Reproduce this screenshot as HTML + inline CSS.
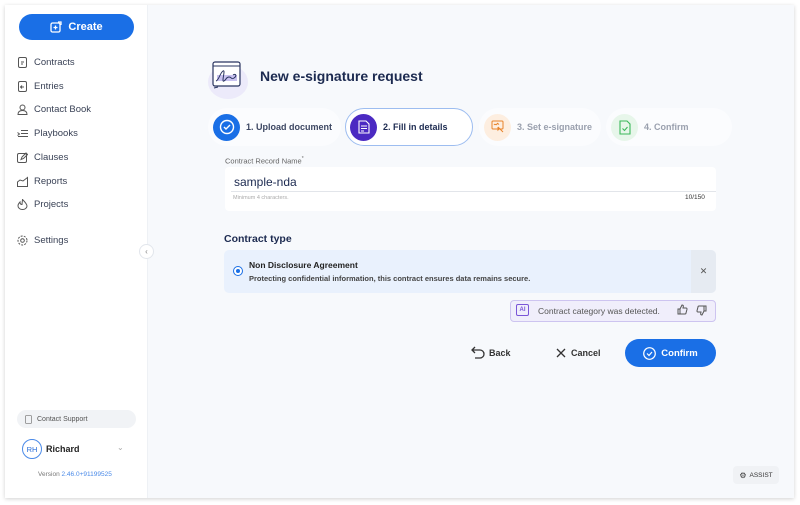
<!DOCTYPE html>
<html><head><meta charset="utf-8"><style>
*{box-sizing:border-box;margin:0;padding:0}
body{width:800px;height:505px;background:#fff;font-family:"Liberation Sans",sans-serif;position:relative;overflow:hidden;color:#1e2a4a}
.frame{position:absolute;left:5px;top:5px;width:789px;height:493px;background:#f7f9fc;box-shadow:0 1px 4px rgba(0,0,0,.18);overflow:hidden}
.side{position:absolute;left:0;top:0;width:143px;height:493px;background:#fff;border-right:1px solid #eef1f5}
.create{position:absolute;left:14px;top:9px;width:115px;height:26px;border-radius:13px;background:#1a6fe6;color:#fff;font-weight:bold;font-size:11px;display:flex;align-items:center;justify-content:center;gap:6px}
.nav{position:absolute;left:12px;font-size:9.5px;color:#3a4256;display:flex;align-items:center;gap:6px}
.nav svg{width:11px;height:11px}
.abs{position:absolute}
.pill{position:absolute;top:103px;height:38px;border-radius:19px;background:#fbfcfe;display:flex;align-items:center;font-size:9px;font-weight:bold}
.circ{width:27px;height:27px;border-radius:50%;margin-left:5px;margin-right:6px;display:flex;align-items:center;justify-content:center}
</style></head><body>
<div class="frame">
<div class="side">
  <div class="create"><svg width="12" height="12" viewBox="0 0 12 12" fill="none" stroke="#fff" stroke-width="1.3"><rect x="1" y="2" width="9" height="9" rx="1.5"/><path d="M5.5 4.5v4M3.5 6.5h4M8 1h3v3"/></svg>Create</div>
  <div class="nav" style="top:52px"><svg viewBox="0 0 11 11" fill="none" stroke="#555" stroke-width="1"><rect x="1.5" y="0.5" width="8" height="10" rx="1.5"/><path d="M4 5h3M4 7h2"/></svg>Contracts</div>
  <div class="nav" style="top:76px"><svg viewBox="0 0 11 11" fill="none" stroke="#555" stroke-width="1"><rect x="1.5" y="0.5" width="8" height="10" rx="1.5"/><path d="M7 6H3.5M5 4.5L3.5 6 5 7.5"/></svg>Entries</div>
  <div class="nav" style="top:99px"><svg viewBox="0 0 11 11" fill="none" stroke="#555" stroke-width="1"><circle cx="5.5" cy="3.5" r="2.5"/><path d="M1 10.5c0-3 2-4 4.5-4s4.5 1 4.5 4z"/></svg>Contact Book</div>
  <div class="nav" style="top:123px"><svg viewBox="0 0 11 11" fill="none" stroke="#555" stroke-width="1"><path d="M4 2.5h7M4 5.5h7M1 8.5h10M0.5 4.5l2 1.5-2 1.5"/></svg>Playbooks</div>
  <div class="nav" style="top:147px"><svg viewBox="0 0 11 11" fill="none" stroke="#555" stroke-width="1"><rect x="0.5" y="1.5" width="9" height="9" rx="1.5"/><path d="M4 7.5l1-2.5 4-4 1.5 1.5-4 4z"/></svg>Clauses</div>
  <div class="nav" style="top:171px"><svg viewBox="0 0 11 11" fill="none" stroke="#555" stroke-width="1"><path d="M0.5 10.5h10V1.5L6 5 3 4 0.5 6z"/></svg>Reports</div>
  <div class="nav" style="top:194px"><svg viewBox="0 0 11 11" fill="none" stroke="#555" stroke-width="1"><path d="M5.5 0.5C9 4 10 6 10 7a4.5 3.5 0 01-9 0c0-2 1-3 2-4 0 2 1 2.5 2 2.5z"/></svg>Projects</div>
  <div class="nav" style="top:230px"><svg viewBox="0 0 11 11" fill="none" stroke="#555" stroke-width="1"><circle cx="5.5" cy="5.5" r="1.8"/><circle cx="5.5" cy="5.5" r="4.5" stroke-dasharray="2 1.2"/></svg>Settings</div>
  <div class="abs" style="left:12px;top:405px;width:119px;height:18px;border-radius:9px;background:#f1f3f6;font-size:7px;color:#555;display:flex;align-items:center;padding-left:8px;gap:5px"><svg width="7" height="9" viewBox="0 0 7 9" fill="none" stroke="#888" stroke-width=".8"><rect x=".5" y=".5" width="6" height="8" rx="1"/></svg>Contact Support</div>
  <div class="abs" style="left:17px;top:434px;width:20px;height:20px;border-radius:50%;border:1.3px solid #4a8ae8;color:#2a6fd8;font-size:7.5px;display:flex;align-items:center;justify-content:center">RH</div>
  <div class="abs" style="left:41px;top:439px;font-size:9px;font-weight:bold;color:#222">Richard</div>
  <div class="abs" style="left:112px;top:438px;font-size:8px;color:#aaa">&#8964;</div>
  <div class="abs" style="left:33px;top:466px;font-size:6.5px;color:#777">Version <span style="color:#4a8ae8">2.46.0+91199525</span></div>
</div>
<div class="abs" style="left:134px;top:239px;width:15px;height:15px;border-radius:50%;background:#fff;border:1px solid #e2e6ec;font-size:8px;color:#888;text-align:center;line-height:13px">&#8249;</div>

<svg class="abs" style="left:201px;top:50px" width="48" height="45" viewBox="0 0 48 45"><ellipse cx="22" cy="27" rx="20" ry="17" fill="#eceafa"/><rect x="7" y="7" width="27" height="24" rx="2" fill="#fff" stroke="#2a3560" stroke-width="1.2"/><path d="M7 11h27" stroke="#2a3560"/><rect x="11" y="20" width="20" height="6" fill="#c9c2f0"/><path d="M10 26c3-1 4-8 7-10s-2 12 1 10 2-4 5-4 2 3 5 1 2-5-1-3" fill="none" stroke="#2a3560" stroke-width="1"/><path d="M8 33l4-1" stroke="#2a3560"/></svg>
<div class="abs" style="left:255px;top:63px;font-size:14px;font-weight:bold;color:#1c2a50">New e-signature request</div>

<div class="pill" style="left:203px;width:133px"><div class="circ" style="background:#1a6fe6"><svg width="16" height="16" viewBox="0 0 16 16" fill="none" stroke="#fff" stroke-width="1.4"><circle cx="8" cy="8" r="6.5"/><path d="M5 8l2 2 4-4"/></svg></div><span style="color:#3c4662">1. Upload document</span></div>
<div class="pill" style="left:340px;width:128px;border:1.5px solid #9dbdf0;background:#fff"><div class="circ" style="background:#4b2ac2;margin-left:4px"><svg width="12" height="14" viewBox="0 0 12 14" fill="none" stroke="#fff" stroke-width="1.1"><path d="M1 1h7l3 3v9H1z"/><path d="M3 6h6M3 8.5h6M3 11h3"/></svg></div><span style="color:#1c2a50">2. Fill in details</span></div>
<div class="pill" style="left:474px;width:122px"><div class="circ" style="background:#fdeee0"><svg width="14" height="14" viewBox="0 0 14 14" fill="none" stroke="#e8832a" stroke-width="1"><rect x="1" y="1" width="11" height="8" rx="1"/><path d="M3 5c1-2 2 1 3-1s1 1 2 0M7 7l5 5M7 7v3l1-1"/></svg></div><span style="color:#9aa0ae">3. Set e-signature</span></div>
<div class="pill" style="left:601px;width:126px"><div class="circ" style="background:#e7f6ea"><svg width="12" height="15" viewBox="0 0 12 15" fill="none" stroke="#3bb85a" stroke-width="1.1"><path d="M1 1h7l3 3v10H1z"/><path d="M3.5 8.5l2 2 3-3.5"/></svg></div><span style="color:#9aa0ae">4. Confirm</span></div>

<div class="abs" style="left:220px;top:151px;font-size:7.5px;color:#666">Contract Record Name<sup style="font-size:5px">*</sup></div>
<div class="abs" style="left:220px;top:162px;width:491px;height:44px;background:#fff;border-radius:4px"></div>
<div class="abs" style="left:229px;top:170px;font-size:12px;color:#1c2a50">sample-nda</div>
<div class="abs" style="left:226px;top:186px;width:485px;height:1px;background:#e2e5ea"></div>
<div class="abs" style="left:228px;top:190px;font-size:5.5px;color:#aaa">Minimum 4 characters.</div>
<div class="abs" style="left:680px;top:189px;font-size:6.5px;color:#333">10/150</div>

<div class="abs" style="left:219px;top:228px;font-size:10.5px;font-weight:bold;color:#1c2a50">Contract type</div>
<div class="abs" style="left:219px;top:245px;width:492px;height:43px;background:#e9f1fd;border-radius:5px"></div>
<div class="abs" style="left:686px;top:245px;width:25px;height:43px;background:#e6ebf2;border-radius:0 5px 5px 0;text-align:center;line-height:43px;font-size:9px;color:#555">&#10005;</div>
<div class="abs" style="left:228px;top:261px;width:10px;height:10px;border-radius:50%;border:1.3px solid #1a6fe6;background:#fff"><div style="margin:1.5px;width:4.5px;height:4.5px;border-radius:50%;background:#1a6fe6"></div></div>
<div class="abs" style="left:244px;top:255px;font-size:8.5px;font-weight:bold;color:#222">Non Disclosure Agreement</div>
<div class="abs" style="left:244px;top:269px;font-size:7.5px;font-weight:bold;color:#444">Protecting confidential information, this contract ensures data remains secure.</div>

<div class="abs" style="left:505px;top:295px;width:206px;height:22px;border:1px solid #cdc4f0;background:#f0eefb;border-radius:4px"></div>
<div class="abs" style="left:511px;top:299px;width:13px;height:12px;border:1.2px solid #7a55d8;border-radius:2px;font-size:6px;font-weight:bold;color:#7a55d8;text-align:center;line-height:10px">AI</div>
<div class="abs" style="left:533px;top:301px;font-size:8.5px;color:#555">Contract category was detected.</div>
<svg class="abs" style="left:672px;top:299px" width="11" height="11" viewBox="0 0 11 11" fill="none" stroke="#555" stroke-width="1"><path d="M1 5h2v5H1zM3 5l2-4c1 0 1.5.5 1.3 1.5L6 4h3a1 1 0 011 1.2l-1 3.8a1 1 0 01-1 1H3"/></svg>
<svg class="abs" style="left:691px;top:300px" width="11" height="11" viewBox="0 0 11 11" fill="none" stroke="#555" stroke-width="1"><g transform="rotate(180 5.5 5.5)"><path d="M1 5h2v5H1zM3 5l2-4c1 0 1.5.5 1.3 1.5L6 4h3a1 1 0 011 1.2l-1 3.8a1 1 0 01-1 1H3"/></g></svg>

<svg class="abs" style="left:466px;top:341px" width="14" height="13" viewBox="0 0 14 13" fill="none" stroke="#333" stroke-width="1.3"><path d="M4 1L1 4l3 3M1 4h8a4 4 0 010 8H4"/></svg>
<div class="abs" style="left:484px;top:343px;font-size:9px;font-weight:bold;color:#333">Back</div>
<svg class="abs" style="left:551px;top:343px" width="10" height="10" viewBox="0 0 10 10" stroke="#333" stroke-width="1.3"><path d="M1 1l8 8M9 1l-8 8"/></svg>
<div class="abs" style="left:566px;top:343px;font-size:9px;font-weight:bold;color:#333">Cancel</div>
<div class="abs" style="left:620px;top:334px;width:91px;height:28px;border-radius:14px;background:#1a6fe6;color:#fff;font-size:9.5px;font-weight:bold;display:flex;align-items:center;justify-content:center;gap:5px"><svg width="13" height="13" viewBox="0 0 13 13" fill="none" stroke="#fff" stroke-width="1.2"><circle cx="6.5" cy="6.5" r="5.8"/><path d="M4 6.5l2 2 3-3.5"/></svg>Confirm</div>

<div class="abs" style="left:728px;top:461px;width:46px;height:18px;border-radius:4px;background:#f0f2f5;font-size:6.5px;color:#333;display:flex;align-items:center;justify-content:center;gap:3px"><span style="font-size:8px">&#9881;&#xFE0E;</span>ASSIST</div>
</div>
</body></html>
